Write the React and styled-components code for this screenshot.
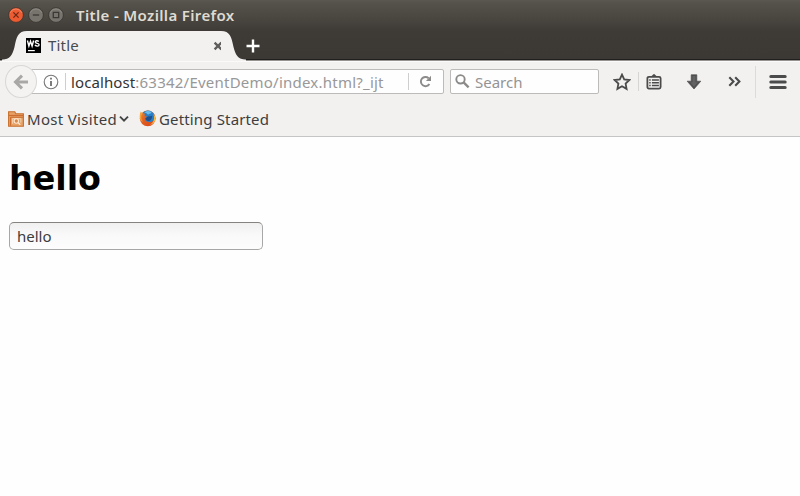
import React from "react";
import styled, { createGlobalStyle } from "styled-components";

const GlobalStyle = createGlobalStyle`
  *, *::before, *::after { box-sizing: border-box; }
  html, body { margin: 0; background: #fefefe; }
  body { font-family: "Noto Sans", "Open Sans", sans-serif; overflow: hidden; }
  svg { display: block; flex: none; }
`;

const Window = styled.div`
  width: 800px;
  height: 496px;
  display: flex;
  flex-direction: column;
  background: #fefefe;
`;

const Frame = styled.header`
  height: 61px;
  flex: none;
  background: linear-gradient(#5b5851 0, #55524b 3px, #4a4741 18px, #3e3b37 31px, #3c3935 58px);
  border-bottom: 1px solid #96938f;
  box-shadow: inset 0 -1px #22201e;
`;

const TitleBar = styled.div`
  height: 31px;
  display: flex;
  align-items: center;
  padding: 0 0 1px 8px;
`;

const WindowButtons = styled.div`
  display: flex;
  gap: 4px;
  margin-right: 12px;
`;

const Label = styled.span`
  display: block;
  flex: none;
  white-space: pre;
  line-height: 20px;
  font-size: ${(p) => p.$size || 15}px;
  font-weight: ${(p) => p.$weight || 400};
  letter-spacing: ${(p) => p.$track || 0}px;
  color: ${(p) => p.$color || "#3e3e3e"};
  width: ${(p) => (p.$width ? `${p.$width}px` : "auto")};
`;

const TabStrip = styled.div`
  height: 30px;
  display: flex;
  padding-left: 2px;
`;

const TabBody = styled.div`
  width: 194px;
  height: 30px;
  padding-bottom: 2px;
  background: #f2f1f0;
  display: flex;
  align-items: center;
`;

const NewTab = styled.div`
  display: flex;
  align-items: center;
  height: 30px;
`;

const NavBar = styled.div`
  height: 42px;
  flex: none;
  display: flex;
  align-items: center;
  padding: 0 12px 2px 5px;
  background: #f2f1f0;
  border-top: 1px solid #fafafa;
`;

const BackButton = styled.div`
  width: 32px;
  height: 33px;
  flex: none;
  border-radius: 50%;
  border: 1px solid #d8d7d6;
  background: #f4f3f2;
  display: flex;
  align-items: center;
  justify-content: center;
  z-index: 1;
`;

const Field = styled.div`
  height: 25px;
  width: ${(p) => p.$width}px;
  flex: none;
  display: flex;
  align-items: center;
  background: #fefefe;
  border: 1px solid #bcbbba;
  border-radius: 2px;
`;

const AddressField = styled(Field)`
  margin-left: -7px;
  margin-right: 6px;
  padding-left: 12px;
`;

const SearchField = styled(Field)`
  padding-left: 4px;
  gap: 5px;
`;

const Rule = styled.div`
  width: 1px;
  flex: none;
  height: ${(p) => p.$height}px;
  margin: 0 ${(p) => p.$right}px 0 ${(p) => p.$left}px;
  background: ${(p) => p.$color || "#cfcecd"};
`;

const Tools = styled.div`
  display: flex;
  align-items: center;
  padding-left: 14px;
`;

const BookmarksBar = styled.div`
  height: 34px;
  flex: none;
  display: flex;
  align-items: center;
  padding: 0 0 2px 8px;
  background: #f2f1f0;
  border-bottom: 1px solid #c6c5c4;
`;

const Bookmark = styled.div`
  display: flex;
  align-items: center;
  gap: ${(p) => p.$inner}px;
  margin-right: ${(p) => p.$gap || 0}px;
`;

const Page = styled.main`
  flex: 1;
  padding: 21px 9px;
`;

const Heading = styled.h1`
  margin: 0 0 24px;
  font: bold 33.3px/41px "DejaVu Sans", sans-serif;
  height: 40px;
  color: #000;
`;

const TextInput = styled.input`
  display: block;
  width: 254px;
  height: 28px;
  padding: 0 7px 1px;
  border: 1px solid #a9a7a5;
  border-top-color: #85827f;
  border-radius: 5px;
  outline: none;
  background: linear-gradient(#f0f0f0, #f9f9f9 12px, #fdfdfd);
  font: 15px "Noto Sans", sans-serif;
  letter-spacing: 0;
  color: #3c3c3c;
`;

const buttonMarks = {
  close: <path d="M5.4 5.4l5.2 5.2M10.6 5.4l-5.2 5.2" />,
  minimize: <path d="M4.8 8h6.4" />,
  maximize: <path d="M5.3 5.3h5.4v5.4H5.3z" />,
};

const WindowButton = ({ kind }) => {
  const close = kind === "close";
  return (
    <svg width="16" height="16" viewBox="0 0 16 16">
      <circle cx="8" cy="8" r="7.4" fill={close ? "#ec5b32" : "#77746e"} stroke="#35322e" strokeWidth=".8" />
      <path d="M2.2 5.8a6.3 6.3 0 0 1 11.6 0" fill="none" stroke={close ? "#f58b67" : "#8d8a83"} strokeWidth=".9" />
      <g fill="none" stroke={close ? "#6b2914" : "#3b3834"} strokeWidth="1.3">{buttonMarks[kind]}</g>
    </svg>
  );
};

const TabEdge = ({ flip }) => (
  <svg width="25" height="30" viewBox="0 0 25 30">
    <path
      transform={flip ? "translate(25 0) scale(-1 1)" : undefined}
      d="M0 28.5C8 28.5 10.5 24 12.5 16C14.5 6 16 0 25 0V30H0Z"
      fill="#f2f1f0"
    />
  </svg>
);

const WebStormIcon = () => (
  <svg width="15" height="15" viewBox="0 0 15 15">
    <path d="M0 0h15v15H0z" fill="#000" />
    <path d="M1.4 2.5L2.9 8 4.5 3.2 6.1 8 7.6 2.5M12.8 3.6C11.4 2.2 9.3 2.7 9.3 4.1c0 1.8 3.8.8 3.8 2.7 0 1.6-2.7 1.7-4.2.3" fill="none" stroke="#fff" strokeWidth="1.4" />
    <path d="M2 12.6h6.8" stroke="#fff" strokeWidth="1.2" />
  </svg>
);

const CloseTabIcon = () => (
  <svg width="10" height="10" viewBox="0 0 10 10">
    <path d="M1.6 1.6l6.8 6.8M8.4 1.6L1.6 8.4" stroke="#5f5e5c" strokeWidth="2.3" />
  </svg>
);

const PlusIcon = () => (
  <svg width="14" height="14" viewBox="0 0 14 14">
    <path d="M7 .5v13M.5 7h13" stroke="#fff" strokeWidth="2.4" />
  </svg>
);

const BackIcon = () => (
  <svg width="16" height="16" viewBox="0 0 16 16">
    <path d="M9 1.6L2.5 8 9 14.4M3 8h12" fill="none" stroke="#a9a8a7" strokeWidth="3" />
  </svg>
);

const InfoIcon = () => (
  <svg width="16" height="16" viewBox="0 0 16 16">
    <circle cx="8" cy="8" r="6.8" fill="none" stroke="#777" strokeWidth="1.1" />
    <path d="M8 3.8v1.8M8 7v5" stroke="#666" strokeWidth="1.7" />
  </svg>
);

const ReloadIcon = () => (
  <svg width="13" height="13" viewBox="0 0 13 13">
    <path d="M10.4 9A4.6 4.6 0 1 1 9.6 3.2" fill="none" stroke="#8c8b8a" strokeWidth="1.9" />
    <path d="M12 .8v5.2H6.9z" fill="#8c8b8a" />
  </svg>
);

const SearchIcon = () => (
  <svg width="15" height="15" viewBox="0 0 15 15">
    <circle cx="5.5" cy="5.3" r="4.2" fill="none" stroke="#8b8a89" strokeWidth="1.9" />
    <path d="M8.6 8.4l5 5" stroke="#8b8a89" strokeWidth="2.3" />
  </svg>
);

const StarIcon = () => (
  <svg width="18" height="18" viewBox="0 0 18 18">
    <path d="M9 1.6l2.2 4.8 5.2.6-3.8 3.6 1 5.3L9 13.3l-4.6 2.6 1-5.3L1.6 7l5.2-.6z" fill="none" stroke="#4b4b4b" strokeWidth="1.8" />
  </svg>
);

const ClipboardIcon = () => (
  <svg width="16" height="16" viewBox="0 0 16 16">
    <path d="M5 2.5L7.8 0h.4L11 2.5V4H5z" fill="#4b4b4b" />
    <rect x="1.4" y="2.8" width="13.2" height="11.8" rx="1.5" fill="#f2f1f0" stroke="#4b4b4b" strokeWidth="1.8" />
    <path d="M3.2 5.9h1.5M5.9 5.9h7M3.2 8.7h1.5M5.9 8.7h7M3.2 11.5h1.5M5.9 11.5h7" stroke="#4b4b4b" strokeWidth="1.5" />
  </svg>
);

const DownloadIcon = () => (
  <svg width="16" height="16" viewBox="0 0 16 16">
    <path d="M5.2.8h5.6v6.4h4L8 15 1.2 7.2h4z" fill="#4f4f4f" stroke="#4f4f4f" strokeWidth=".7" strokeLinejoin="round" />
    <path d="M6.5 2h3v6.3h2.3L8 12.7 4.2 8.3h2.3z" fill="#626262" />
  </svg>
);

const ChevronsIcon = () => (
  <svg width="14" height="11" viewBox="0 0 14 11">
    <path d="M1.3 1.2l4.2 4.3-4.2 4.3M7.2 1.2l4.2 4.3-4.2 4.3" fill="none" stroke="#4b4b4b" strokeWidth="2.1" />
  </svg>
);

const MenuIcon = () => (
  <svg width="18" height="14" viewBox="0 0 18 14">
    <path d="M1.8 1.6h14.4M1.8 7h14.4M1.8 12.4h14.4" stroke="#4b4b4b" strokeWidth="3" strokeLinecap="round" />
  </svg>
);

const FolderIcon = () => (
  <svg width="16" height="16" viewBox="0 0 16 16">
    <path d="M.6 15.2V.8h6.2l1 2h7.6v12.4z" fill="#e8a267" stroke="#c8702f" strokeWidth="1.1" />
    <path d="M1 4.4h14.4M2.6 14.8V6.2h12.8" fill="none" stroke="#c9692b" strokeWidth="1" />
    <path d="M4.6 12.8V7.6h8.2v4" fill="none" stroke="#f6d3ae" strokeWidth="1" />
    <circle cx="8.3" cy="10" r="2.2" fill="#dd8747" stroke="#ffe9d2" strokeWidth="1.1" />
    <path d="M10 11.6l2.3 2.2" stroke="#ffe9d2" strokeWidth="1.3" />
  </svg>
);

const ChevronDownIcon = () => (
  <svg width="10" height="8" viewBox="0 0 10 8">
    <path d="M1 1.6l4 4 4-4" fill="none" stroke="#444" strokeWidth="1.9" />
  </svg>
);

const FirefoxIcon = () => (
  <svg width="17" height="17" viewBox="0 0 17 17">
    <defs>
      <linearGradient id="fox" x1="0" y1="0" x2="1" y2="1">
        <stop offset="0" stopColor="#f08a2a" />
        <stop offset=".45" stopColor="#e05f20" />
        <stop offset="1" stopColor="#d8421a" />
      </linearGradient>
    </defs>
    <circle cx="8.7" cy="8.3" r="7.9" fill="url(#fox)" />
    <path d="M3.4 3.2C6.8-.9 13.2-.2 15.4 5.2c.5 3.4-.9 6-3.6 6.7-3.5.8-6-.8-6-3.6l2.6-1.5L5.6 6 5.9 3.6z" fill="#2a80c8" />
    <path d="M5.4 2.5c2.2-1.8 5.1-1.8 7.2-.3-.8 1.7-2.5 1.2-3.4 2.5L7.1 3z" fill="#69bdec" />
    <path d="M8.5 6.8c1.6-.9 3.4-.1 4.8-1.2-.2 2.6-.9 5-3.2 5.3-2.2.2-3.5-.9-3.6-2.7z" fill="#1f4f8d" />
    <path d="M14.3 4.2c1.9 4.3.4 8.6-3.7 10.5 3.9-.4 6-3.3 5.9-6.4-.1-1.6-.9-3.3-2.2-4.1z" fill="#f8bd45" />
    <path d="M1.7 1.6l1.9 2C1.6 6 2 9.8 4.3 12 1.8 11 .6 8.8.7 6.8c0-2 .3-3.7 1-5.2z" fill="#f4a23a" />
  </svg>
);

const TabFavicon = styled.div`margin: 1px 7px 0 -1px;`;
const TabClose = styled.div`flex: none; margin: 1px 0 0 133px;`;
const AddressLabel = styled.div`display: flex; width: 336px;`;
const Spaced = styled.div`margin-left: ${(p) => p.$left}px;`;

export default function App() {
  return (
    <Window>
      <GlobalStyle />
      <Frame>
        <TitleBar>
          <WindowButtons>
            <WindowButton kind="close" />
            <WindowButton kind="minimize" />
            <WindowButton kind="maximize" />
          </WindowButtons>
          <Label $weight={600} $size={15} $track={0.35} $color="#dfdbd2">Title - Mozilla Firefox</Label>
        </TitleBar>
        <TabStrip>
          <TabEdge />
          <TabBody>
            <TabFavicon><WebStormIcon /></TabFavicon>
            <Label $width={32} $track={0.2} $color="#484b50">Title</Label>
            <TabClose><CloseTabIcon /></TabClose>
          </TabBody>
          <TabEdge flip />
          <NewTab><PlusIcon /></NewTab>
        </TabStrip>
      </Frame>
      <NavBar>
        <BackButton><BackIcon /></BackButton>
        <AddressField $width={414}>
          <InfoIcon />
          <Rule $height={17} $left={6} $right={5} />
          <AddressLabel>
            <Label $color="#333" $track={0.1}>localhost</Label>
            <Label $color="#989898" $track={0.23}>:63342/EventDemo/index.html?_ijt</Label>
          </AddressLabel>
          <Rule $height={17} $left={1} $right={10} />
          <ReloadIcon />
        </AddressField>
        <SearchField $width={149}>
          <SearchIcon />
          <Label $color="#949494">Search</Label>
        </SearchField>
        <Tools>
          <StarIcon />
          <Rule $height={19} $left={7} $right={7} $color="#d6d5d4" />
          <ClipboardIcon />
          <Spaced $left={24}><DownloadIcon /></Spaced>
          <Spaced $left={26}><ChevronsIcon /></Spaced>
          <Rule $height={32} $left={13} $right={13} $color="#dcdbda" />
          <MenuIcon />
        </Tools>
      </NavBar>
      <BookmarksBar>
        <Bookmark $inner={3} $gap={10}>
          <FolderIcon />
          <Label $width={89} $track={0.32}>Most Visited</Label>
          <ChevronDownIcon />
        </Bookmark>
        <Bookmark $inner={3}>
          <FirefoxIcon />
          <Label $track={0.15}>Getting Started</Label>
        </Bookmark>
      </BookmarksBar>
      <Page>
        <Heading>hello</Heading>
        <TextInput type="text" defaultValue="hello" aria-label="Message" />
      </Page>
    </Window>
  );
}
